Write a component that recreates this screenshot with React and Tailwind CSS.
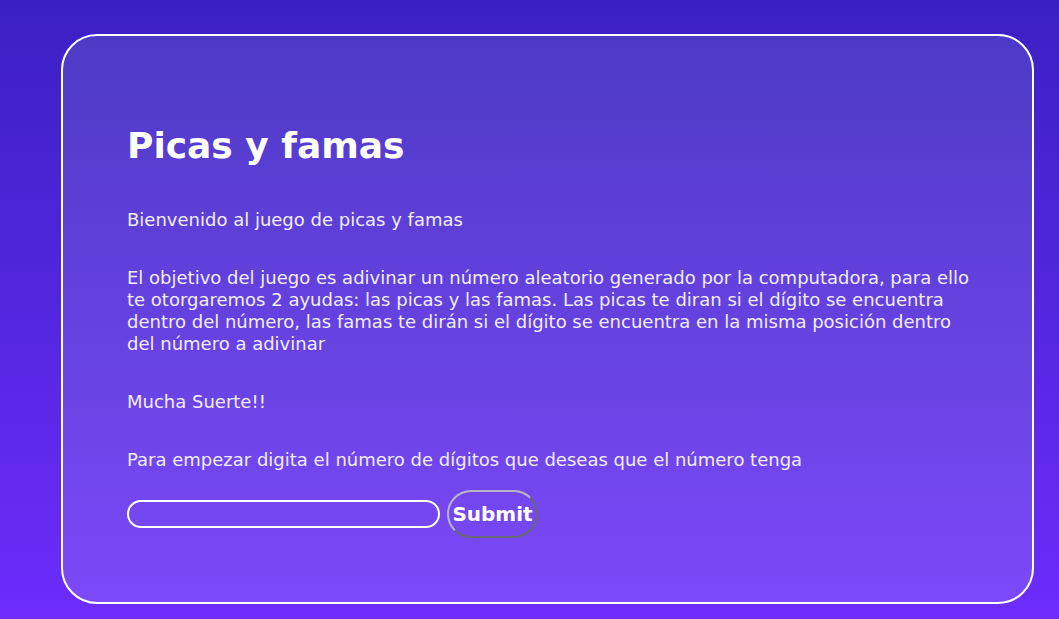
export default function App() {
  return (
    <div
      className="min-h-screen w-full bg-gradient-to-b from-[#3a20c3] to-[#6d2cfb] pt-[34px] pb-[15px]"
      style={{ fontFamily: '"DejaVu Sans", sans-serif' }}
    >
      <div className="ml-[61px] w-[973px] rounded-[36px] border-2 border-white bg-gradient-to-b from-[#4d3ac6] to-[#7c49f8] py-16 pl-16 pr-12">
        <h1 className="mt-6 text-[36px] font-bold leading-[43px] text-white">Picas y famas</h1>
        <div className="mt-[42px] flex flex-col gap-[36px] text-[18px] leading-[22px] text-[#f1edff]">
          <p>Bienvenido al juego de picas y famas</p>
          <p className="max-w-[850px]">
            El objetivo del juego es adivinar un número aleatorio generado por la computadora, para ello te
            otorgaremos 2 ayudas: las picas y las famas. Las picas te diran si el dígito se encuentra dentro del
            número, las famas te dirán si el dígito se encuentra en la misma posición dentro del número a adivinar
          </p>
          <p>Mucha Suerte!!</p>
          <p>Para empezar digita el número de dígitos que deseas que el número tenga</p>
        </div>
        <form className="mt-[19px] flex items-center gap-[7px]" onSubmit={e => e.preventDefault()}>
          <input
            type="text"
            className="h-[28px] w-[313px] rounded-full border-2 border-white bg-transparent px-3 text-white outline-none"
          />
          <button
            type="submit"
            className="h-[48px] w-[91px] rounded-full border-2 border-[#b8b4c6] [border-style:outset] bg-transparent p-0 text-[20px] font-bold text-white"
          >
            Submit
          </button>
        </form>
      </div>
    </div>
  )
}
